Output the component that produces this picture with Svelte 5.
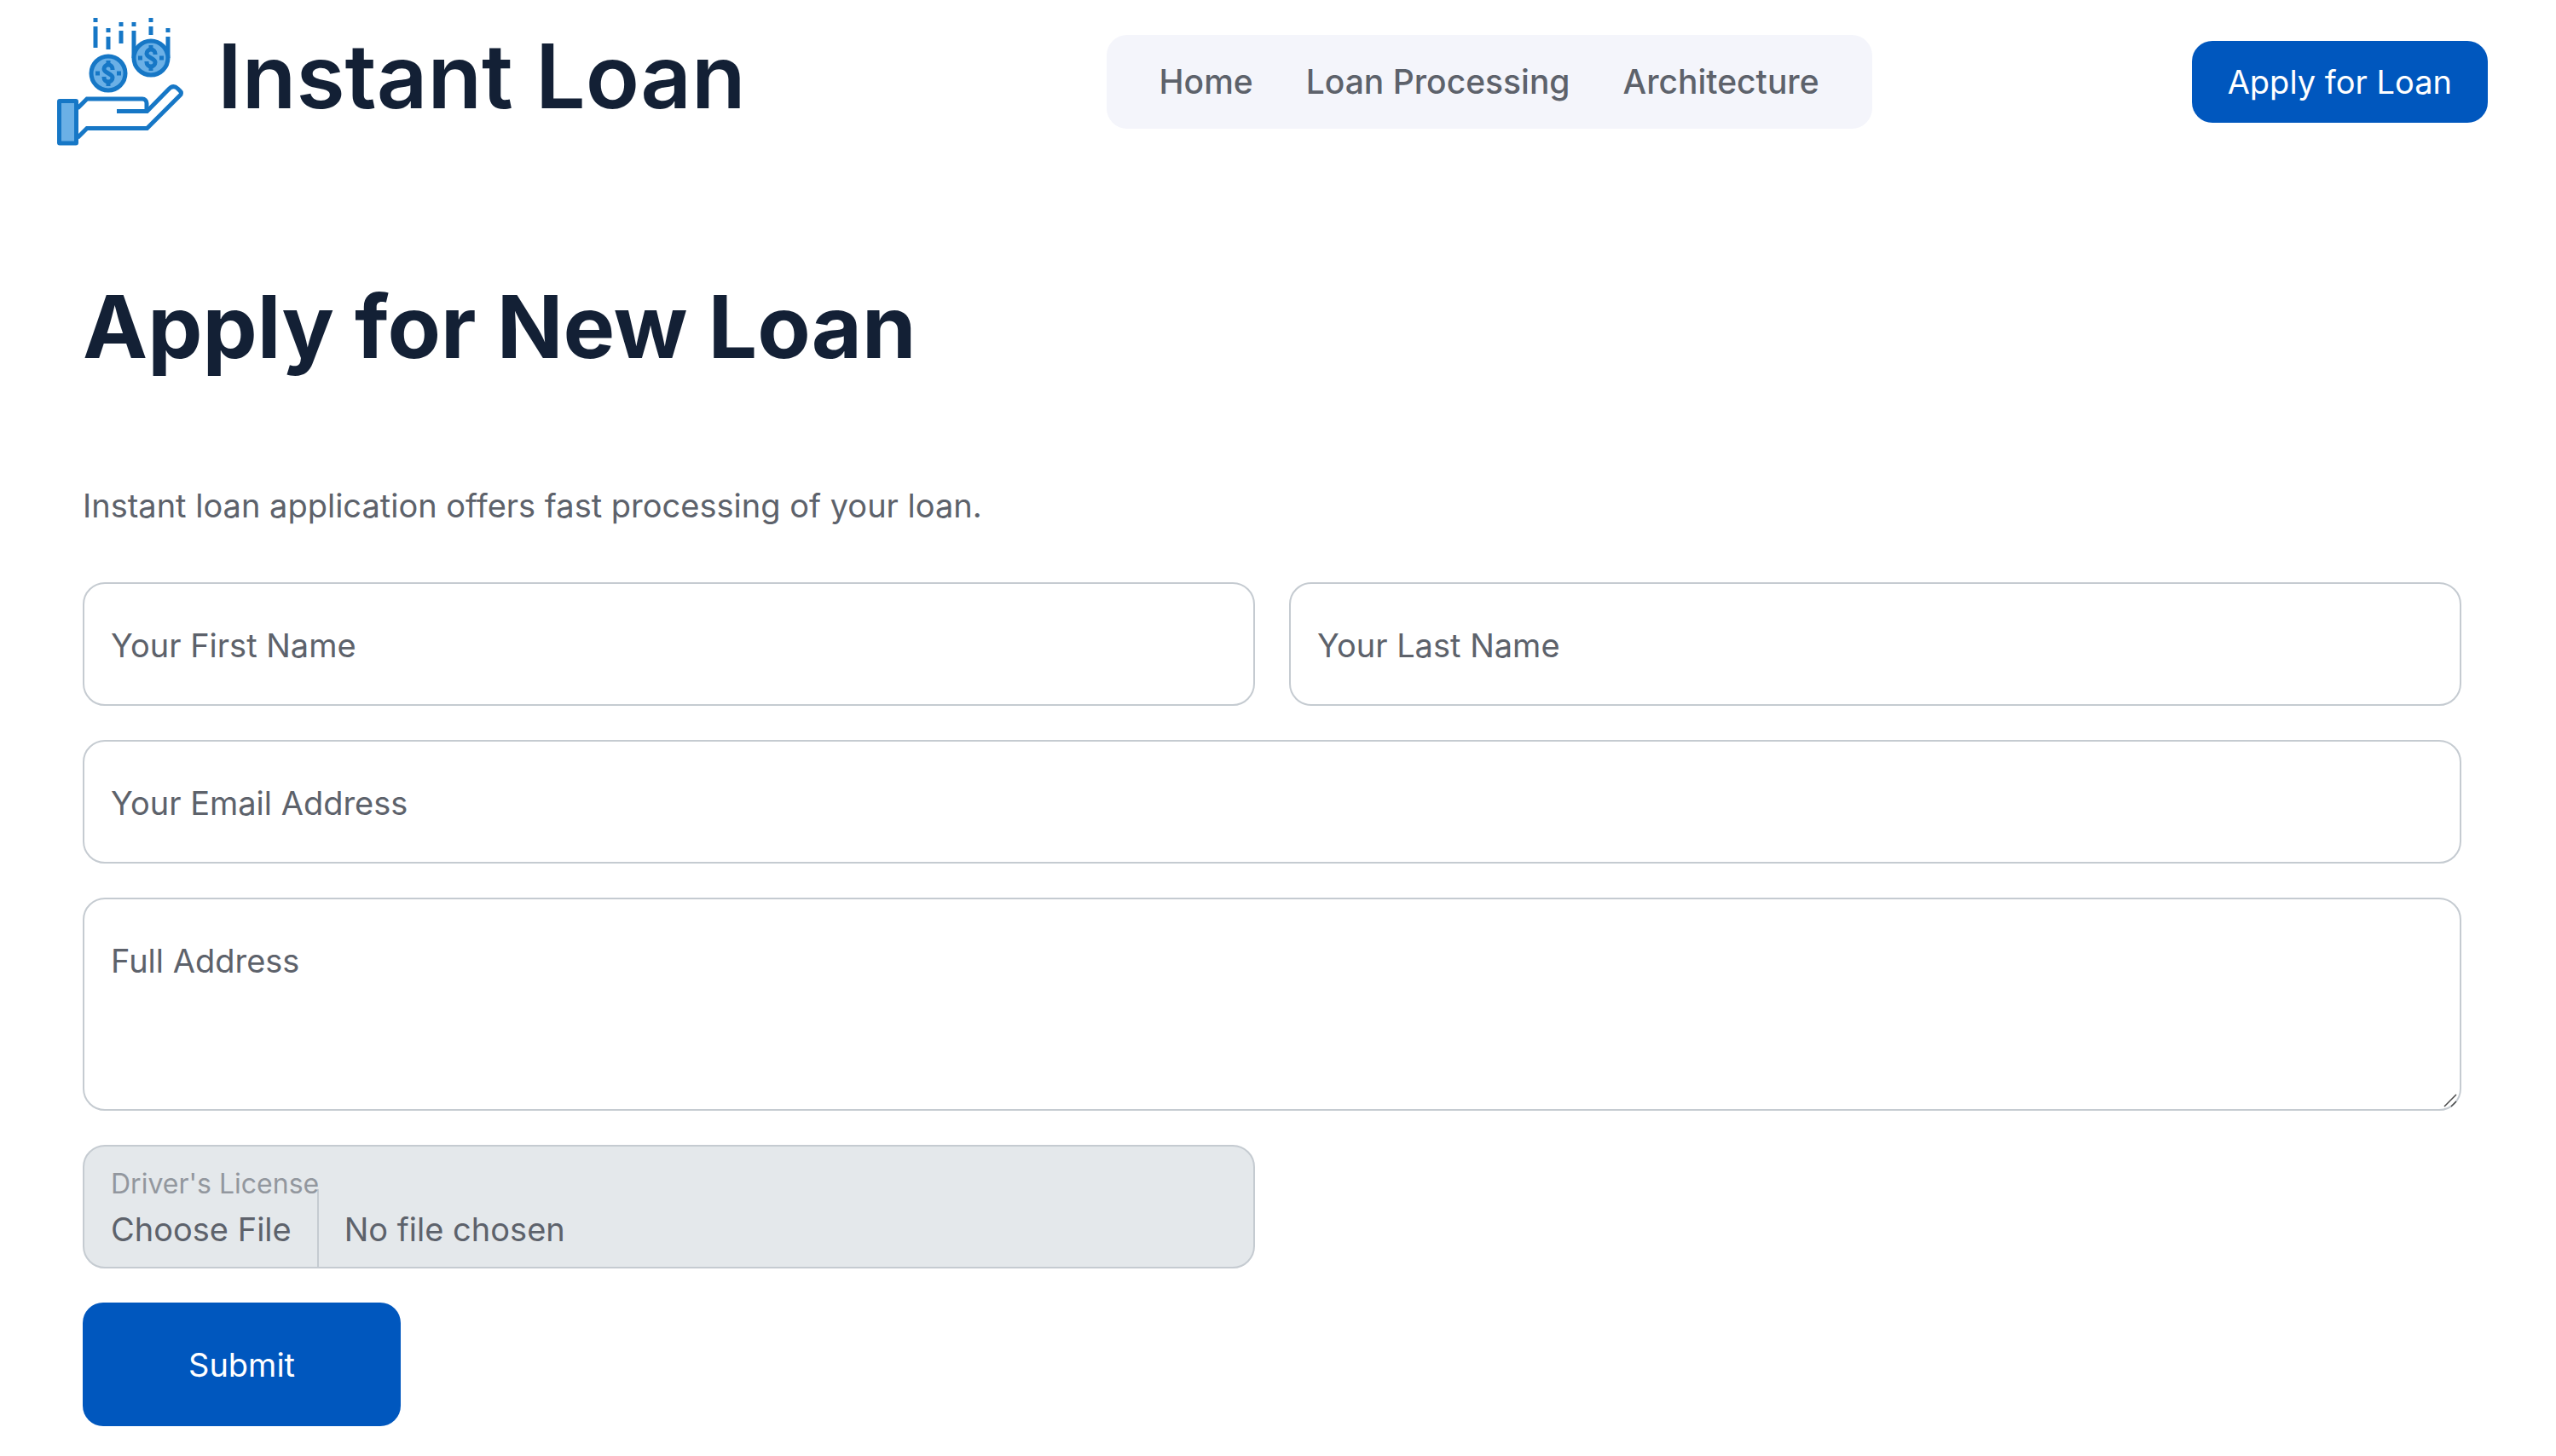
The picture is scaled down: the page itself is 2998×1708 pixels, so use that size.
<script>
  let firstName = '';
  let lastName = '';
  let email = '';
  let address = '';

  const links = ['Home', 'Loan Processing', 'Architecture'];

  // x, dot top, line top, line bottom
  const streaks = [
    [62, 21, 31, 56],
    [77, 33, 43, 58],
    [92, 26, 36, 51],
    [107, 26, 36, 68],
    [127, 21, 31, 41],
    [147, 33, 43, 68],
  ];

  const coins = [
    [77, 86],
    [127, 68],
  ];
</script>

<header>
  <a class="brand" href="#home">
    <svg class="logo" viewBox="17 21 148 150" aria-hidden="true">
      <g fill="none" stroke="#1677c6" stroke-width="5">
        {#each streaks as [x, dot, top, bottom]}
          <path d="M{x} {dot}v5M{x} {top}V{bottom}" />
        {/each}
        {#each coins as [x, y]}
          <g transform="translate({x} {y})">
            <circle r="20" fill="#6bb0e6" />
            <path d="M-15 0h5M10 0h5" />
            <path d="M5 -4V-5a5 5 0 0 0 -10 0C-5 -0.500 5 0.500 5 5a5 5 0 0 1 -10 0V4M0 -15v5M0 10v5" />
          </g>
        {/each}
        <rect x="19.500" y="118.500" width="20" height="49.500" rx="0.500" fill="#6bb0e6" />
        <path d="M41 127L52 116H117a5 5 0 0 1 5 5V130" />
        <path d="M87 130.500H122.500L147.500 105Q153 99 158.500 104L161 106.500Q164 109 161 112L122.500 150.500H52L41 161.500" />
      </g>
    </svg>
    <span>Instant Loan</span>
  </a>

  <nav>
    {#each links as link}
      <a href="#{link.toLowerCase().replace(' ', '-')}">{link}</a>
    {/each}
  </nav>

  <a class="button apply" href="#apply">Apply for Loan</a>
</header>

<main>
  <h1>Apply for New Loan</h1>
  <p>Instant loan application offers fast processing of your loan.</p>

  <form on:submit|preventDefault>
    <div class="field">
      <input id="first-name" type="text" bind:value={firstName} />
      <label for="first-name" class:floated={firstName}>Your First Name</label>
    </div>
    <div class="field">
      <input id="last-name" type="text" bind:value={lastName} />
      <label for="last-name" class:floated={lastName}>Your Last Name</label>
    </div>
    <div class="field wide">
      <input id="email" type="email" bind:value={email} />
      <label for="email" class:floated={email}>Your Email Address</label>
    </div>
    <div class="field wide">
      <textarea id="address" bind:value={address}></textarea>
      <label for="address" class:floated={address}>Full Address</label>
      <svg class="grip" viewBox="0 0 16 16" aria-hidden="true">
        <path d="M1 15L15 1M9 15L15 9" stroke="#4a4a4a" stroke-width="1.500" />
      </svg>
    </div>
    <div class="field file">
      <input id="license" type="file" />
      <label for="license" class="floated">Driver's License</label>
    </div>
    <div class="wide">
      <button class="button submit" type="submit">Submit</button>
    </div>
  </form>
</main>

<style>
  :global(body) {
    background: #fff;
    color: #5d626b;
    font-family: Inter, "Liberation Sans", sans-serif;
    font-size: 38px;
    line-height: 60px;
  }

  header {
    display: flex;
    align-items: center;
    justify-content: space-between;
    padding: 21px 80px 0 67px;
  }

  a {
    color: inherit;
    text-decoration: none;
  }

  .brand {
    display: flex;
    align-items: center;
    gap: 40px;
    padding-right: 48px;
    color: #132035;
    font-size: 104px;
    font-weight: 600;
    line-height: 120px;
  }

  .brand span {
    padding-bottom: 14px;
  }

  .logo {
    width: 148px;
    height: 150px;
  }

  nav {
    display: flex;
    gap: 62px;
    padding: 25px 62px;
    border-radius: 24px;
    background: #f4f5fb;
    font-size: 39px;
    font-weight: 500;
  }

  .button {
    box-sizing: border-box;
    border: 0;
    border-radius: 24px;
    background: #0057be;
    color: #fff;
    font: inherit;
    text-align: center;
    cursor: pointer;
  }

  .apply {
    padding: 18px 42px;
  }

  main {
    padding: 152px 111px 35px 97px;
  }

  h1 {
    margin: 0 0 120px;
    color: #132035;
    font-size: 102px;
    font-weight: 700;
    line-height: 120px;
  }

  p {
    margin: 0 0 60px;
  }

  form {
    display: grid;
    grid-template-columns: 1fr 1fr;
    gap: 40px;
  }

  .wide {
    grid-column: 1 / -1;
  }

  .field {
    position: relative;
    display: flex;
  }

  input,
  textarea {
    box-sizing: border-box;
    width: 100%;
    height: 145px;
    padding: 50px 31px 0;
    border: 2px solid #c5cbd1;
    border-radius: 26px;
    background: #fff;
    color: inherit;
    font: inherit;
  }

  textarea {
    height: 250px;
    resize: none;
  }

  label {
    position: absolute;
    top: 44px;
    left: 33px;
    pointer-events: none;
  }

  .floated {
    top: 16px;
    font-size: 32px;
    opacity: 0.6;
  }

  .grip {
    position: absolute;
    right: 5px;
    bottom: 4px;
    width: 16px;
    height: 16px;
  }

  .file input {
    background: #e4e8eb;
    overflow: hidden;
  }

  .file input::file-selector-button {
    height: 93px;
    margin: 0 30px 0 -31px;
    padding: 0 30px 0 31px;
    border: 0;
    border-right: 2px solid #c5cbd1;
    background: transparent;
    color: inherit;
    font: inherit;
  }

  .submit {
    height: 145px;
    padding: 0 124px;
  }
</style>
